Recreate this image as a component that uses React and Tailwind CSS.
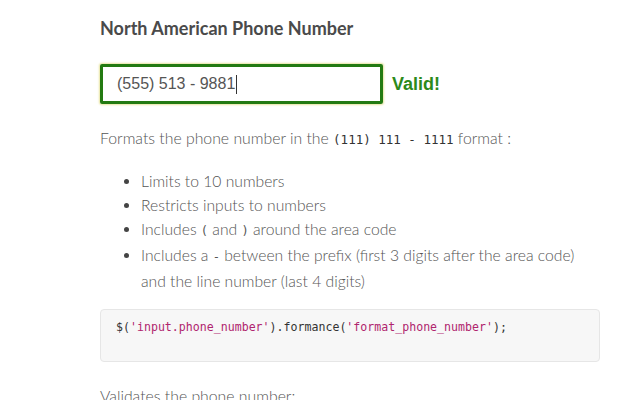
export default function App() {
  const mono = { fontFamily: "'DejaVu Sans Mono', monospace" };
  return (
    <div className="w-[640px] h-[400px] overflow-hidden bg-white" style={{ fontFamily: "Lato, 'Liberation Sans', sans-serif" }}>
      <div className="ml-[100px] w-[500px] pt-[17px]">
        <h2 className="text-[18px] leading-[22px] font-bold text-[#4a4a4a]">North American Phone Number</h2>
        <div className="mt-[25px] flex items-center">
          <div className="w-[283px] h-[40px] border-[3px] border-[#237a12] rounded-[2px] shadow-[0_0_2px_1px_#e8e4a0] flex items-center pl-[14px]">
            <span className="text-[16px] text-[#555]" style={{ fontFamily: "'Liberation Sans', Arial, sans-serif" }}>(555) 513 - 9881</span>
            <span className="w-px h-[19px] bg-[#333] ml-[1px]"></span>
          </div>
          <span className="ml-[9px] text-[18px] font-bold text-[#2c8a1a]" style={{ fontFamily: "'Liberation Sans', Arial, sans-serif" }}>Valid!</span>
        </div>
        <p className="mt-[22px] text-[15.8px] font-light text-[#555] leading-[24px]">
          Formats the phone number in the{" "}
          <code className="text-[12.5px] text-[#333]" style={mono}>(111) 111 - 1111</code>
          {" "}format :
        </p>
        <ul className="mt-[17px] pl-[41px] list-disc text-[15.7px] font-light text-[#555] leading-[24px] marker:text-[#444]">
          <li>Limits to 10 numbers</li>
          <li>Restricts inputs to numbers</li>
          <li>
            Includes <code className="text-[12px]" style={mono}>(</code> and{" "}
            <code className="text-[12px]" style={mono}>)</code> around the area code
          </li>
          <li>
            Includes a <code className="text-[12px]" style={mono}>-</code> between the prefix (first 3 digits after the area code)<br />and the line number (last 4 digits)
          </li>
        </ul>
        <pre className="mt-[16px] h-[53px] bg-[#f7f7f7] border border-[#e6e6e6] rounded-[4px] px-[15px] pt-[8px] text-[11.6px] leading-[18px] text-[#333]" style={mono}>
          $(<span className="text-[#b0256e]">'input.phone_number'</span>).formance(<span className="text-[#b0256e]">'format_phone_number'</span>);
        </pre>
        <p className="mt-[22px] text-[15.8px] font-light text-[#555] leading-[24px]">Validates the phone number:</p>
      </div>
    </div>
  );
}
